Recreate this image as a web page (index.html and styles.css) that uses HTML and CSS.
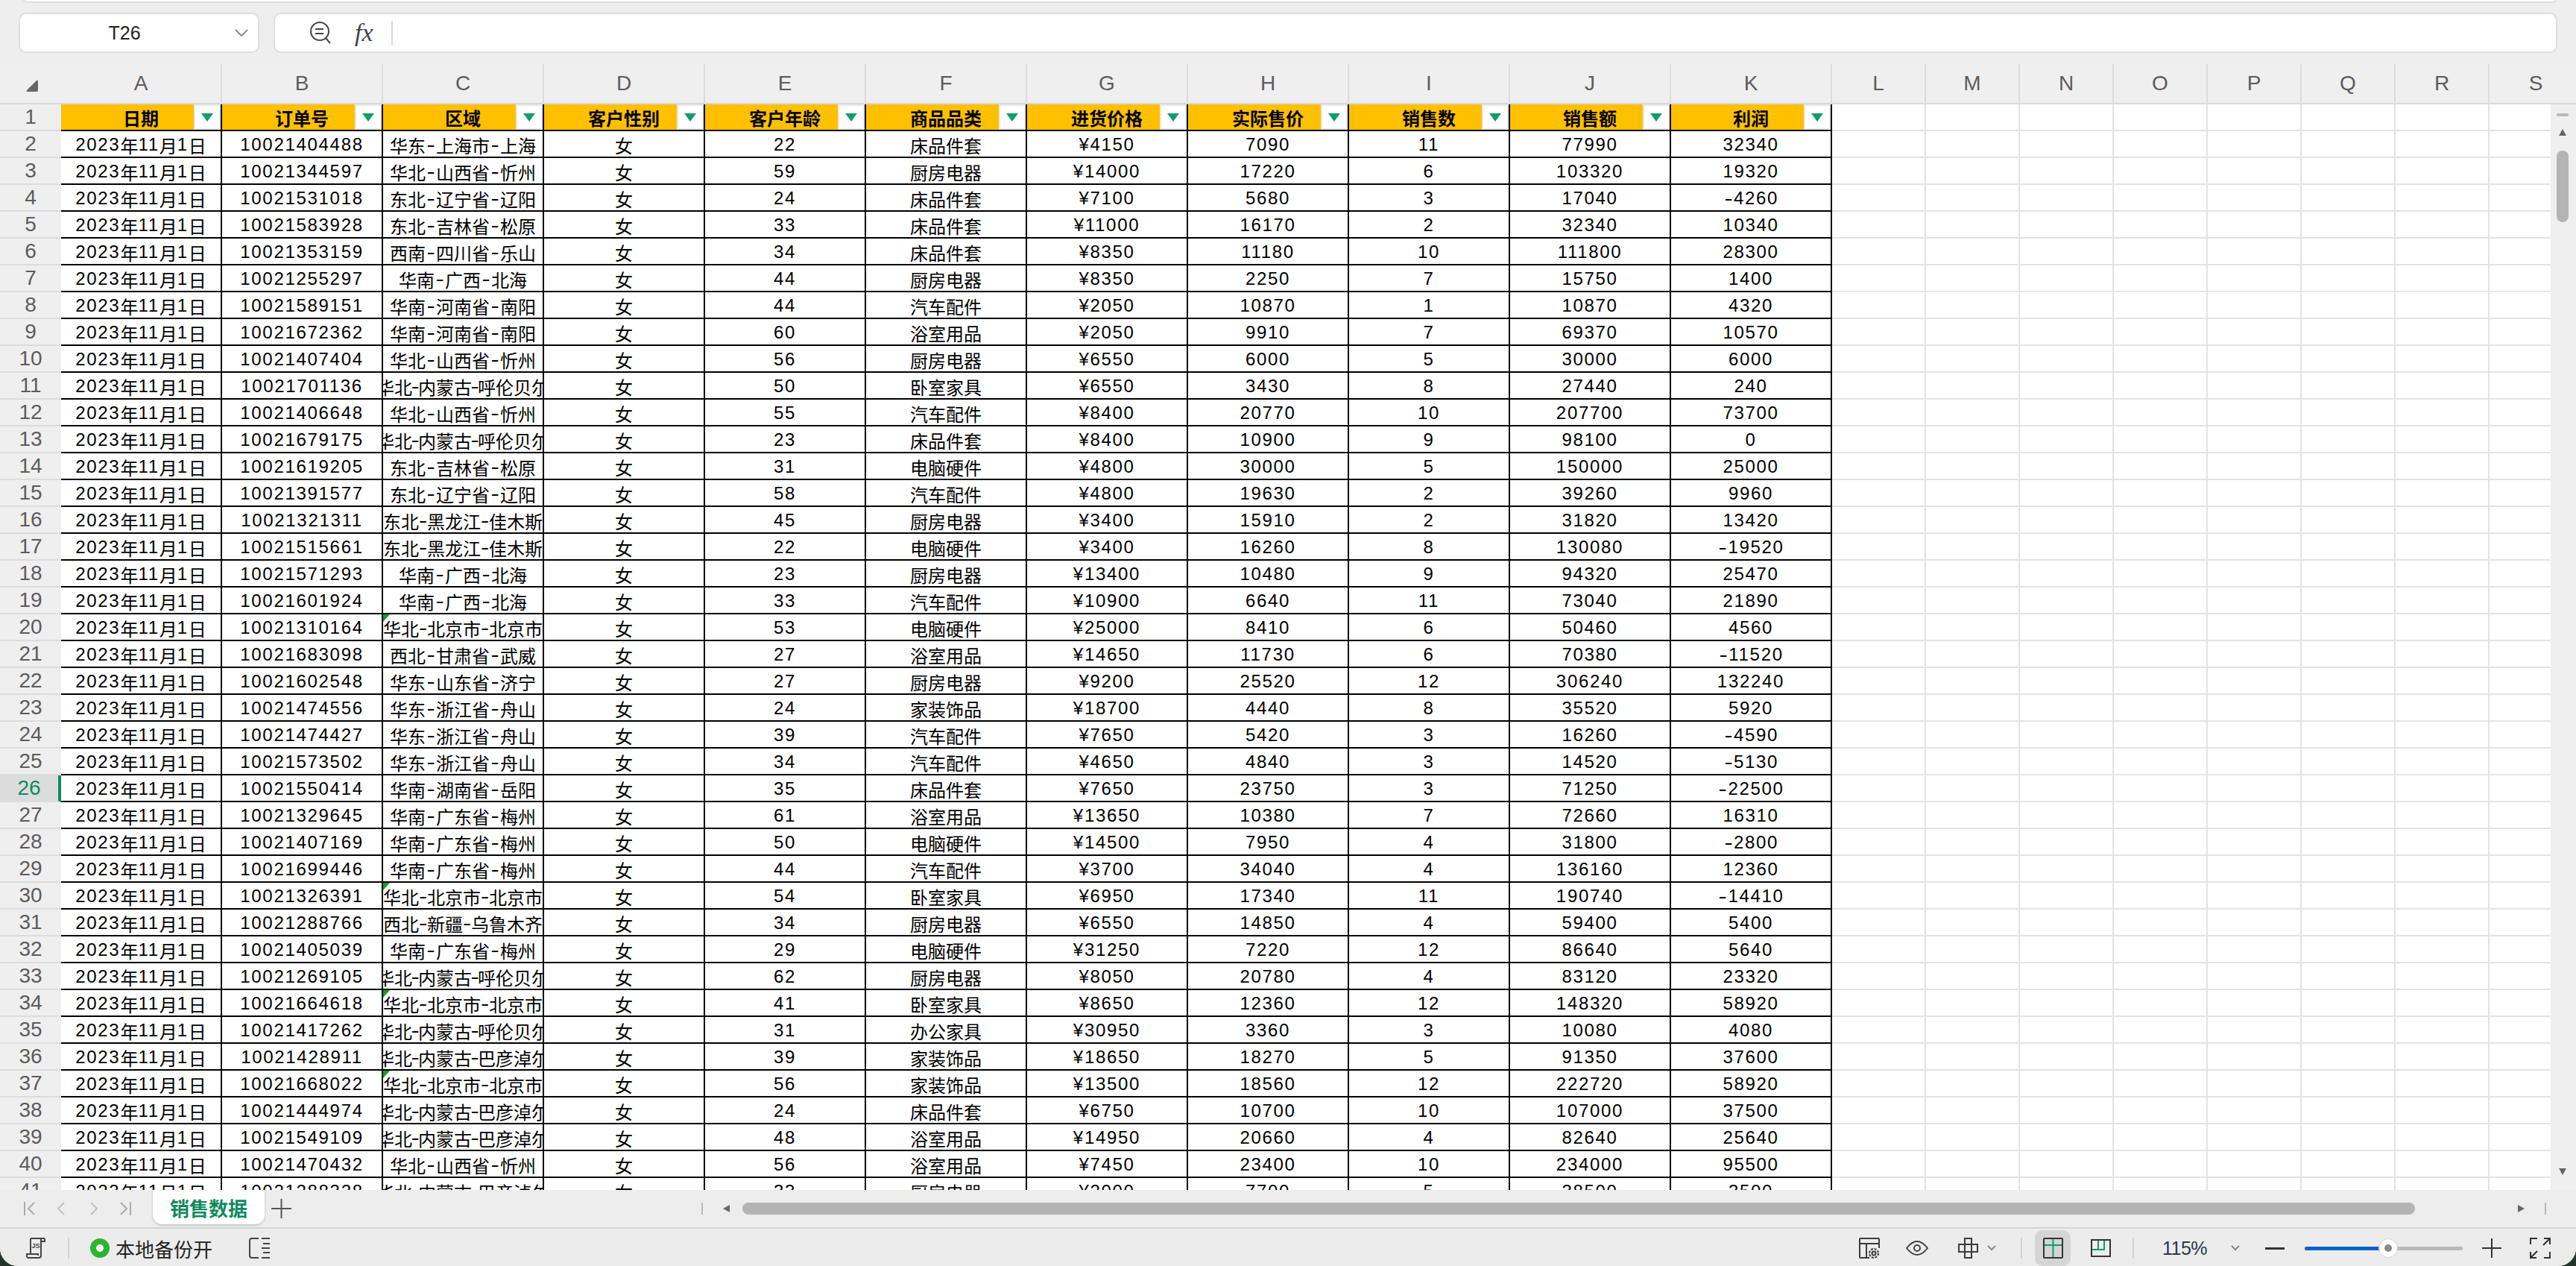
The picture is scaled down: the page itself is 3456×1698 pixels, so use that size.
FILE: index.html
```html
<!DOCTYPE html>
<html lang="zh-CN">
<head>
    <meta charset="UTF-8">
    <title>销售数据</title>
    <link rel="stylesheet" href="styles.css">
</head>
<body>
    <div class="app">
        <!-- Name box and formula bar -->
        <div class="toolbar">
            <div class="top-edge"></div>
            <div class="name-box">
                <span class="name-text">T26</span>
                <svg class="name-arrow" width="18" height="10" viewBox="0 0 18 10"><path d="M1 1l8 8 8-8" fill="none" stroke="#8a8a8a" stroke-width="2"/></svg>
            </div>
            <div class="formula-box">
                <svg class="zoom-icon" width="28" height="30" viewBox="0 0 28 30" fill="none" stroke="#444" stroke-width="2"><circle cx="13" cy="13" r="12"/><path d="M7 10h11M7 16h11M21 22l6 7"/></svg>
                <span class="fx">fx</span>
                <span class="formula-divider"></span>
            </div>
        </div>

        <!-- Sheet grid -->
        <div class="sheet">
            <div class="grid" id="grid"></div>
            <div class="v-scroll">
                <span class="v-dash"></span>
                <span class="tri-up"></span>
                <span class="v-thumb"></span>
                <span class="tri-down"></span>
            </div>
        </div>

        <!-- Sheet tabs -->
        <div class="tabbar">
            <svg class="nav-first" width="16" height="18" viewBox="0 0 16 18" fill="none" stroke="#ababab" stroke-width="2"><path d="M1 0v18M14 1L6 9l8 8"/></svg>
            <svg class="nav-prev" width="10" height="18" viewBox="0 0 10 18" fill="none" stroke="#c2c2c2" stroke-width="2"><path d="M9 1L1 9l8 8"/></svg>
            <svg class="nav-next" width="10" height="18" viewBox="0 0 10 18" fill="none" stroke="#c2c2c2" stroke-width="2"><path d="M1 1l8 8-8 8"/></svg>
            <svg class="nav-last" width="16" height="18" viewBox="0 0 16 18" fill="none" stroke="#ababab" stroke-width="2"><path d="M15 0v18M2 1l8 8-8 8"/></svg>
            <div class="tab">销售数据</div>
            <svg class="tab-add" width="27" height="26" viewBox="0 0 27 26" fill="none" stroke="#555" stroke-width="2"><path d="M0 13h27M13.5 0v26"/></svg>
            <div class="h-scroll">
                <span class="h-dash"></span>
                <span class="tri-left"></span>
                <div class="h-track"><span class="h-thumb"></span></div>
                <span class="tri-right"></span>
                <span class="h-dash"></span>
            </div>
        </div>

        <!-- Status bar -->
        <div class="statusbar">
            <div class="status-left">
                <svg width="26" height="28" viewBox="0 0 26 28" fill="none" stroke="#444" stroke-width="2"><path d="M6 22V2q0-1 1-1h17q1 0 1 1v3h-5M20 1v23q0 3-3 3H3q-2 0-2-3v-2h15v2"/><text x="7.5" y="14" class="js-text">JS</text></svg>
                <span class="st-sep backup-sep"></span>
                <span class="backup-dot"></span>
                <span class="backup-text">本地备份开</span>
                <svg class="doc-icon" width="28" height="28" viewBox="0 0 28 28" fill="none" stroke="#444" stroke-width="2"><path d="M13 1H4Q1 1 1 4v20q0 3 3 3h9M17 1h11M17 14h11M17 27h11M19 8h9M19 20h9"/></svg>
            </div>
            <div class="status-right">
                <svg width="28" height="28" viewBox="0 0 28 28" fill="none" stroke="#3c3c3c" stroke-width="2"><path d="M14 27H2q-1 0-1-1V2q0-1 1-1h24q1 0 1 1v12M1 8h26M10 8v19"/><circle cx="20" cy="21" r="2.5"/><circle cx="20" cy="21" r="6" stroke-dasharray="3 1.7"/></svg>
                <svg class="st-eye" width="30" height="20" viewBox="0 0 30 20" fill="none" stroke="#444" stroke-width="2"><path d="M1 10Q8 1 15 1t14 9q-7 9-14 9T1 10z"/><circle cx="15" cy="10" r="4"/></svg>
                <svg class="st-cross" width="27" height="28" viewBox="0 0 27 28" fill="none" stroke="#3c3c3c" stroke-width="2"><path d="M9 1h9v26H9zM1 9h25v10H1z"/></svg>
                <svg class="st-chev" width="12" height="8" viewBox="0 0 12 8" fill="none" stroke="#888" stroke-width="2"><path d="M1 1l5 5 5-5"/></svg>
                <span class="st-sep sep-a"></span>
                <div class="view-active">
                    <svg width="27" height="28" viewBox="0 0 27 28" fill="none"><path d="M1 10h25M13.5 2v25" stroke="#0f9d6c" stroke-width="2"/><rect x="1" y="1" width="25" height="26" rx="1" stroke="#333" stroke-width="2"/></svg>
                </div>
                <svg class="st-page" width="27" height="24" viewBox="0 0 27 24" fill="none"><path d="M1 14h17V1M10 1v13" stroke="#0f9d6c" stroke-width="2"/><path d="M1 1h25v22H1zM1 17v6" stroke="#333" stroke-width="2"/></svg>
                <span class="st-sep sep-b"></span>
                <span class="zoom-text">115%</span>
                <svg class="st-chev2" width="12" height="8" viewBox="0 0 12 8" fill="none" stroke="#888" stroke-width="2"><path d="M1 1l5 5 5-5"/></svg>
                <span class="st-minus"></span>
                <div class="slider">
                    <span class="slider-fill"></span>
                    <span class="slider-knob"></span>
                </div>
                <svg class="st-plus" width="26" height="26" viewBox="0 0 26 26" fill="none" stroke="#333" stroke-width="2"><path d="M0 13h26M13 0v26"/></svg>
                <svg class="st-full" width="28" height="28" viewBox="0 0 28 28" fill="none" stroke="#333" stroke-width="2"><path d="M1 9V1h9M27 1L18 10M19 1h8v8M1 19v8h8M1 27l9-9M19 27h8v-8"/></svg>
            </div>
        </div>
    </div>
    <script src="script.js"></script>
</body>
</html>
```

FILE: styles.css
```css
* {
    box-sizing: border-box;
}

body {
    margin: 0;
    background-color: #26352c;
    font-family: "Liberation Sans", "Noto Sans CJK SC", sans-serif;
    color: #000;
}

.app {
    width: 3456px;
    height: 1698px;
    display: flex;
    flex-direction: column;
    overflow: hidden;
    background-color: #ececec;
    border-radius: 0 0 24px 24px;
}

/* Toolbar */
.toolbar {
    position: relative;
    height: 86px;
    flex: none;
    display: flex;
    padding: 17px 25px 0;
    background-color: #eeeeee;
}

.top-edge {
    position: absolute;
    top: -10px;
    left: 30px;
    right: 25px;
    height: 14px;
    background-color: #fff;
    border: 2px solid #dddddd;
    border-radius: 10px;
}

.name-box {
    width: 323px;
    height: 54px;
    display: flex;
    align-items: center;
    background-color: #fff;
    border: 2px solid #dedede;
    border-radius: 10px;
}

.name-text {
    width: 280px;
    text-align: center;
    font-size: 25px;
    color: #222;
}

.name-arrow {
    margin-left: 8px;
}

.formula-box {
    margin-left: 19px;
    width: 3064px;
    height: 54px;
    display: flex;
    align-items: center;
    background-color: #fff;
    border: 2px solid #dedede;
    border-radius: 10px;
}

.zoom-icon {
    margin-left: 47px;
}

.fx {
    margin-left: 32px;
    font-family: "Liberation Serif", serif;
    font-style: italic;
    font-size: 34px;
    color: #444;
}

.formula-divider {
    margin-left: 24px;
    width: 2px;
    height: 32px;
    background-color: #d8d8d8;
}

/* Sheet */
.sheet {
    position: relative;
    flex: 1;
    overflow: hidden;
    background-color: #fff;
}

.grid {
    display: grid;
    grid-template-columns: 82px repeat(11, 216px) repeat(8, 126px);
    grid-template-rows: 54px;
    grid-auto-rows: 36px;
    width: 3466px;
}

.col-head,
.row-head,
.corner {
    display: flex;
    align-items: center;
    justify-content: center;
    background-color: #efefef;
    color: #5c5c5c;
    font-size: 28px;
}

.corner {
    align-items: flex-end;
    justify-content: flex-start;
    padding: 0 0 15px 35px;
    border-bottom: 2px solid #d8d8d8;
}

.col-head {
    border-right: 2px solid #dcdcdc;
    border-bottom: 2px solid #d8d8d8;
}

.row-head {
    border-bottom: 2px solid #dcdcdc;
}

.row-head.active {
    background-color: #dcdcdc;
    color: #0f8a5f;
    border-right: 4px solid #0f8a5f;
}

.cell {
    position: relative;
    display: flex;
    align-items: center;
    justify-content: center;
    overflow: hidden;
    white-space: nowrap;
    font-size: 24px;
    padding-top: 2px;
    border-right: 2px solid #000;
    border-bottom: 2px solid #000;
}

.blank {
    border-right: 2px solid #e3e3e3;
    border-bottom: 2px solid #e3e3e3;
}

.title {
    background-color: #ffc000;
    font-weight: bold;
    padding-top: 0;
}

.num {
    letter-spacing: 1.7px;
}

/* hyphens are wide in the original font */
.dash {
    display: inline-block;
    width: 14px;
    text-align: center;
    transform: scaleX(1.4);
}

/* Filter button in the header cells */
.filter {
    position: absolute;
    top: 0;
    right: 0;
    width: 36px;
    height: 34px;
    display: flex;
    align-items: center;
    justify-content: center;
    background-color: #fff;
    border: 2px solid #e8e8e8;
}

.filter::after {
    content: "";
    border-left: 8px solid transparent;
    border-right: 8px solid transparent;
    border-top: 11px solid #0f9d6c;
}

/* Green error corner */
.flag::before {
    content: "";
    position: absolute;
    top: 0;
    left: 0;
    border-top: 10px solid #1b9a2c;
    border-right: 9px solid transparent;
}

/* Vertical scroll bar */
.v-scroll {
    position: absolute;
    top: 54px;
    right: 0;
    bottom: 0;
    width: 34px;
    background-color: #efefef;
}

.v-dash {
    position: absolute;
    top: 12px;
    left: 8px;
    width: 16px;
    height: 4px;
    border-radius: 2px;
    background-color: #b8b8b8;
}

.tri-up {
    position: absolute;
    top: 33px;
    left: 11px;
    border-left: 5px solid transparent;
    border-right: 5px solid transparent;
    border-bottom: 9px solid #666;
}

.tri-down {
    position: absolute;
    bottom: 20px;
    left: 11px;
    border-left: 5px solid transparent;
    border-right: 5px solid transparent;
    border-top: 9px solid #666;
}

.v-thumb {
    position: absolute;
    top: 62px;
    left: 8px;
    width: 16px;
    height: 96px;
    border-radius: 8px;
    background-color: #b4b4b4;
}

/* Tabs */
.tabbar {
    height: 50px;
    flex: none;
    display: flex;
    align-items: center;
    padding-left: 32px;
    background-color: #ededed;
}

.nav-prev {
    margin-left: 29px;
}

.nav-next {
    margin-left: 34px;
}

.nav-last {
    margin-left: 29px;
}

.tab {
    align-self: flex-start;
    margin-left: 29px;
    width: 150px;
    height: 46px;
    display: flex;
    align-items: center;
    justify-content: center;
    background-color: #fff;
    border-radius: 0 0 12px 12px;
    box-shadow: 0 1px 3px rgba(0, 0, 0, 0.25);
    color: #0f8a5c;
    font-size: 26px;
    font-weight: bold;
}

.tab-add {
    margin-left: 9px;
}

.h-scroll {
    flex: 1;
    display: flex;
    align-items: center;
    margin-left: 550px;
    padding-right: 40px;
}

.h-dash {
    width: 2px;
    height: 16px;
    background-color: #b8b8b8;
}

.tri-left {
    margin-left: 27px;
    border-top: 5px solid transparent;
    border-bottom: 5px solid transparent;
    border-right: 9px solid #666;
}

.tri-right {
    border-top: 5px solid transparent;
    border-bottom: 5px solid transparent;
    border-left: 9px solid #666;
    margin-right: 27px;
}

.h-track {
    flex: 1;
    margin: 0 5px 0 17px;
}

.h-thumb {
    display: block;
    width: 2244px;
    height: 16px;
    border-radius: 8px;
    background-color: #b4b4b4;
}

/* Status bar */
.statusbar {
    height: 52px;
    flex: none;
    display: flex;
    justify-content: space-between;
    padding-top: 2px;
    background-color: #ececec;
    border-top: 2px solid #d6d6d6;
}

.status-left,
.status-right {
    display: flex;
    align-items: center;
    height: 48px;
}

.status-left {
    padding-left: 35px;
}

.status-right {
    padding-right: 34px;
}

.st-sep {
    width: 2px;
    height: 28px;
    background-color: #d2d2d2;
}

.backup-sep {
    margin-left: 30px;
}

.backup-dot {
    margin-left: 28px;
    width: 26px;
    height: 26px;
    border-radius: 50%;
    border: 8px solid #2db52d;
    background-color: #fff;
}

.backup-text {
    margin-left: 8px;
    font-size: 26px;
    color: #222;
}

.doc-icon {
    margin-left: 49px;
}

.js-text {
    font-size: 9px;
    font-weight: bold;
    fill: #444;
    stroke: none;
}

.st-eye {
    margin-left: 35px;
}

.st-cross {
    margin-left: 40px;
}

.st-chev {
    margin-left: 12px;
}

.sep-a {
    margin-left: 33px;
}

.view-active {
    margin-left: 17px;
    width: 48px;
    height: 48px;
    display: flex;
    align-items: center;
    justify-content: center;
    background-color: #d5d5d5;
    border-radius: 10px;
}

.st-page {
    margin-left: 27px;
}

.sep-b {
    margin-left: 29px;
}

.zoom-text {
    margin-left: 38px;
    width: 60px;
    font-size: 25px;
    letter-spacing: -0.5px;
    color: #2a3650;
    white-space: nowrap;
}

.st-chev2 {
    margin-left: 32px;
}

.st-minus {
    margin-left: 34px;
    width: 26px;
    height: 3px;
    background-color: #333;
}

.slider {
    position: relative;
    margin-left: 27px;
    width: 212px;
    height: 5px;
    border-radius: 3px;
    background-color: #b8b8b8;
}

.slider-fill {
    position: absolute;
    top: 0;
    left: 0;
    width: 101px;
    height: 5px;
    border-radius: 3px 0 0 3px;
    background-color: #0a62cc;
}

.slider-knob {
    position: absolute;
    top: -10px;
    left: 100px;
    width: 24px;
    height: 24px;
    border-radius: 50%;
    border: 7px solid #fff;
    outline: 1px solid #d8d8d8;
    background-color: #888;
}

.st-plus {
    margin-left: 26px;
}

.st-full {
    margin-left: 38px;
}
```

FILE: script.js
```js
const grid = document.getElementById("grid");

const columns = "ABCDEFGHIJKLMNOPQRS".split("");
const titles = ["日期", "订单号", "区域", "客户性别", "客户年龄", "商品品类", "进货价格", "实际售价", "销售数", "销售额", "利润"];

const rows = [
    "10021404488|华东-上海市-上海|22|床品件套|4150|7090|11|77990|32340",
    "10021344597|华北-山西省-忻州|59|厨房电器|14000|17220|6|103320|19320",
    "10021531018|东北-辽宁省-辽阳|24|床品件套|7100|5680|3|17040|-4260",
    "10021583928|东北-吉林省-松原|33|床品件套|11000|16170|2|32340|10340",
    "10021353159|西南-四川省-乐山|34|床品件套|8350|11180|10|111800|28300",
    "10021255297|华南-广西-北海|44|厨房电器|8350|2250|7|15750|1400",
    "10021589151|华南-河南省-南阳|44|汽车配件|2050|10870|1|10870|4320",
    "10021672362|华南-河南省-南阳|60|浴室用品|2050|9910|7|69370|10570",
    "10021407404|华北-山西省-忻州|56|厨房电器|6550|6000|5|30000|6000",
    "10021701136|华北-内蒙古-呼伦贝尔|50|卧室家具|6550|3430|8|27440|240",
    "10021406648|华北-山西省-忻州|55|汽车配件|8400|20770|10|207700|73700",
    "10021679175|华北-内蒙古-呼伦贝尔|23|床品件套|8400|10900|9|98100|0",
    "10021619205|东北-吉林省-松原|31|电脑硬件|4800|30000|5|150000|25000",
    "10021391577|东北-辽宁省-辽阳|58|汽车配件|4800|19630|2|39260|9960",
    "10021321311|东北-黑龙江-佳木斯|45|厨房电器|3400|15910|2|31820|13420",
    "10021515661|东北-黑龙江-佳木斯|22|电脑硬件|3400|16260|8|130080|-19520",
    "10021571293|华南-广西-北海|23|厨房电器|13400|10480|9|94320|25470",
    "10021601924|华南-广西-北海|33|汽车配件|10900|6640|11|73040|21890",
    "10021310164|华北-北京市-北京市|53|电脑硬件|25000|8410|6|50460|4560",
    "10021683098|西北-甘肃省-武威|27|浴室用品|14650|11730|6|70380|-11520",
    "10021602548|华东-山东省-济宁|27|厨房电器|9200|25520|12|306240|132240",
    "10021474556|华东-浙江省-舟山|24|家装饰品|18700|4440|8|35520|5920",
    "10021474427|华东-浙江省-舟山|39|汽车配件|7650|5420|3|16260|-4590",
    "10021573502|华东-浙江省-舟山|34|汽车配件|4650|4840|3|14520|-5130",
    "10021550414|华南-湖南省-岳阳|35|床品件套|7650|23750|3|71250|-22500",
    "10021329645|华南-广东省-梅州|61|浴室用品|13650|10380|7|72660|16310",
    "10021407169|华南-广东省-梅州|50|电脑硬件|14500|7950|4|31800|-2800",
    "10021699446|华南-广东省-梅州|44|汽车配件|3700|34040|4|136160|12360",
    "10021326391|华北-北京市-北京市|54|卧室家具|6950|17340|11|190740|-14410",
    "10021288766|西北-新疆-乌鲁木齐|34|厨房电器|6550|14850|4|59400|5400",
    "10021405039|华南-广东省-梅州|29|电脑硬件|31250|7220|12|86640|5640",
    "10021269105|华北-内蒙古-呼伦贝尔|62|厨房电器|8050|20780|4|83120|23320",
    "10021664618|华北-北京市-北京市|41|卧室家具|8650|12360|12|148320|58920",
    "10021417262|华北-内蒙古-呼伦贝尔|31|办公家具|30950|3360|3|10080|4080",
    "10021428911|华北-内蒙古-巴彦淖尔|39|家装饰品|18650|18270|5|91350|37600",
    "10021668022|华北-北京市-北京市|56|家装饰品|13500|18560|12|222720|58920",
    "10021444974|华北-内蒙古-巴彦淖尔|24|床品件套|6750|10700|10|107000|37500",
    "10021549109|华北-内蒙古-巴彦淖尔|48|浴室用品|14950|20660|4|82640|25640",
    "10021470432|华北-山西省-忻州|56|浴室用品|7450|23400|10|234000|95500",
    "10021288328|华北-内蒙古-巴彦淖尔|33|厨房电器|2000|7700|5|38500|3500"
];

function addCell(className, html) {
    const cell = document.createElement("div");
    cell.className = className;
    cell.innerHTML = html || "";
    grid.appendChild(cell);
    return cell;
}

function markup(text) {
    return text
        .replace(/[\d¥]+/g, match => `<span class="num">${match}</span>`)
        .replace(/-/g, '<span class="dash">-</span>');
}

function addBlanks() {
    for (let i = 0; i < 8; i++) addCell("cell blank");
}

function createSheet() {
    addCell("corner", '<svg width="16" height="16" viewBox="0 0 16 16"><path d="M14 1q2-1 2 1v12q0 2-2 2H2Q0 16 1 14z" fill="#666"/></svg>');
    columns.forEach(name => addCell("col-head", name));

    addCell("row-head", "1");
    titles.forEach(title => {
        const cell = addCell("cell title", title);
        const filter = document.createElement("span");
        filter.className = "filter";
        cell.appendChild(filter);
    });
    addBlanks();

    rows.forEach((row, index) => {
        const rowNumber = index + 2;
        const [order, region, age, category, price, sale, count, amount, profit] = row.split("|");
        const values = ["2023年11月1日", order, region, "女", age, category, "¥" + price, sale, count, amount, profit];

        addCell(rowNumber === 26 ? "row-head active" : "row-head", String(rowNumber));
        values.forEach((value, i) => {
            const flagged = i === 2 && region === "华北-北京市-北京市";
            addCell(flagged ? "cell flag" : "cell", markup(value));
        });
        addBlanks();
    });
}

createSheet();
```
